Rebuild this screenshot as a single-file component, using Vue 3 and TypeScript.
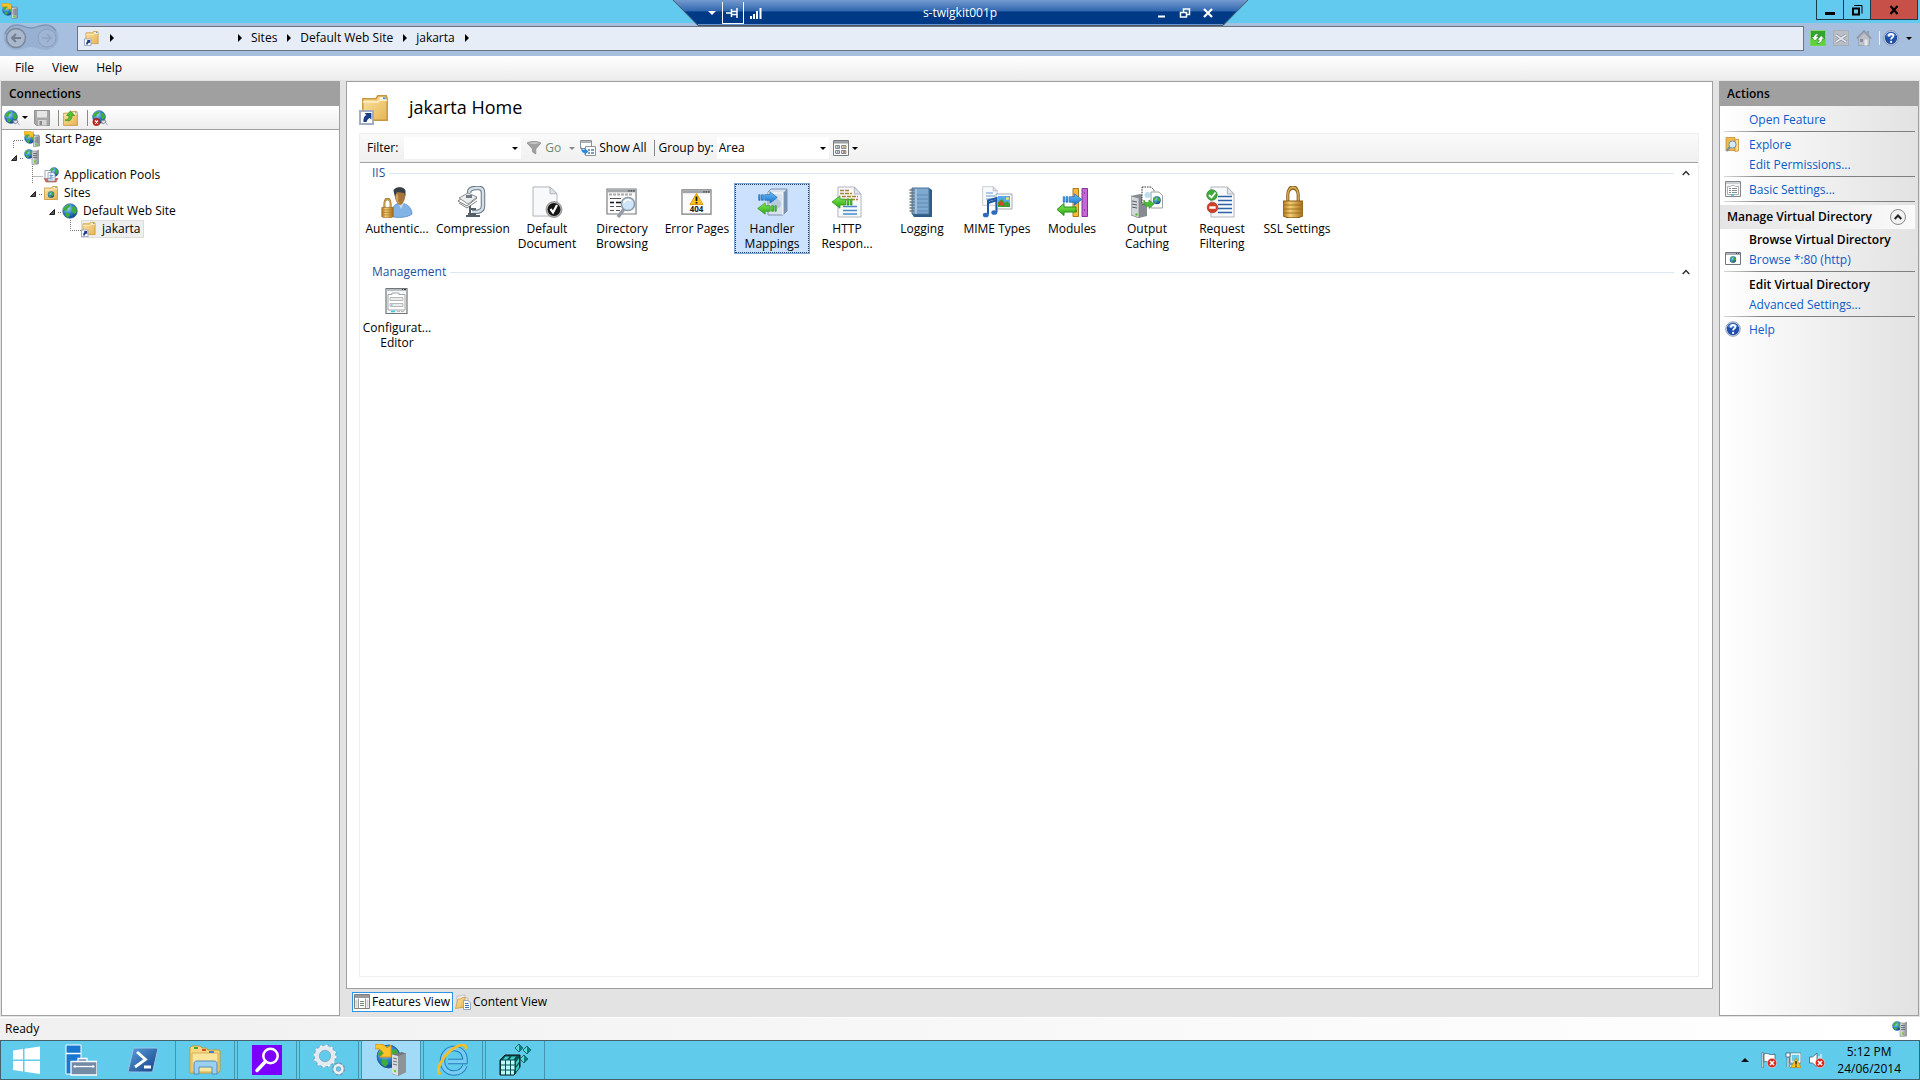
<script setup lang="ts">
import { ref } from 'vue'

interface TreeRow {
  label: string
  level: number
  icon: string
  guide: 'first' | 'middle' | 'last' | 'open'
  selected?: boolean
}

interface Feature {
  label: string
  icon: string
  code?: string
}

interface FeatureGroup {
  name: string
  items: Feature[]
}

const menus: string[] = ['File', 'View', 'Help']
const crumbs: string[] = ['Sites', 'Default Web Site', 'jakarta']

const tree: TreeRow[] = [
  { label: 'Start Page', level: 0, icon: 'iis', guide: 'first' },
  { label: '', level: 0, icon: 'server', guide: 'open' },
  { label: 'Application Pools', level: 1, icon: 'pools', guide: 'middle' },
  { label: 'Sites', level: 1, icon: 'sites', guide: 'open' },
  { label: 'Default Web Site', level: 2, icon: 'globe', guide: 'open' },
  { label: 'jakarta', level: 3, icon: 'folder-link', guide: 'last', selected: true },
]

const groups: FeatureGroup[] = [
  {
    name: 'IIS',
    items: [
      { label: 'Authentic...', icon: 'auth' },
      { label: 'Compression', icon: 'compress' },
      { label: 'Default Document', icon: 'document' },
      { label: 'Directory Browsing', icon: 'directory' },
      { label: 'Error Pages', icon: 'error', code: '404' },
      { label: 'Handler Mappings', icon: 'handler' },
      { label: 'HTTP Respon...', icon: 'response' },
      { label: 'Logging', icon: 'logging' },
      { label: 'MIME Types', icon: 'mime' },
      { label: 'Modules', icon: 'modules' },
      { label: 'Output Caching', icon: 'caching' },
      { label: 'Request Filtering', icon: 'filtering' },
      { label: 'SSL Settings', icon: 'ssl' },
    ],
  },
  { name: 'Management', items: [{ label: 'Configurat... Editor', icon: 'config' }] },
]

const selectedFeature = ref('handler')
const filterText = ref('')
const groupBy = ref('Area')

const taskbar = [
  { icon: 'start', label: 'Start', state: 'pinned' },
  { icon: 'manager', label: 'Server Manager', state: 'pinned' },
  { icon: 'powershell', label: 'PowerShell', state: 'pinned' },
  { icon: 'explorer', label: 'File Explorer', state: 'running' },
  { icon: 'search', label: 'Search', state: 'running' },
  { icon: 'services', label: 'Services', state: 'running' },
  { icon: 'iis-large', label: 'IIS Manager', state: 'active' },
  { icon: 'ie', label: 'Internet Explorer', state: 'running' },
  { icon: 'registry', label: 'Registry Editor', state: 'running' },
]
</script>

<template>
  <div class="desktop">
    <svg class="sprite" width="0" height="0" aria-hidden="true">
      <defs>
        <radialGradient id="gGlobe" cx=".35" cy=".3" r=".8">
          <stop offset="0" stop-color="#a9dcff" /><stop offset=".5" stop-color="#2f7fd0" /><stop offset="1" stop-color="#0c3a7c" />
        </radialGradient>
        <linearGradient id="gFolder" x1="0" y1="0" x2="1" y2="1">
          <stop offset="0" stop-color="#fbe3a0" /><stop offset="1" stop-color="#e6b455" />
        </linearGradient>
        <linearGradient id="gGold" x1="0" y1="0" x2="1" y2="0">
          <stop offset="0" stop-color="#b5781c" /><stop offset=".35" stop-color="#f3cf74" /><stop offset="1" stop-color="#a9701a" />
        </linearGradient>
        <linearGradient id="gSteel" x1="0" y1="0" x2="1" y2="0">
          <stop offset="0" stop-color="#e4e7ea" /><stop offset="1" stop-color="#8c9298" />
        </linearGradient>
        <linearGradient id="gBlue" x1="0" y1="0" x2="0" y2="1">
          <stop offset="0" stop-color="#6fc4fa" /><stop offset="1" stop-color="#1270cc" />
        </linearGradient>
        <linearGradient id="gGreen" x1="0" y1="0" x2="0" y2="1">
          <stop offset="0" stop-color="#8bea5c" /><stop offset="1" stop-color="#27a80f" />
        </linearGradient>
        <linearGradient id="gPs" x1="0" y1="0" x2="1" y2="1">
          <stop offset="0" stop-color="#5aa0de" /><stop offset="1" stop-color="#123f83" />
        </linearGradient>
        <linearGradient id="gRdp" x1="0" y1="0" x2="0" y2="1">
          <stop offset="0" stop-color="#7b9fd4" /><stop offset=".46" stop-color="#2f66ae" /><stop offset=".48" stop-color="#003a87" /><stop offset="1" stop-color="#003a87" />
        </linearGradient>
      </defs>

      <symbol id="globe" viewBox="0 0 16 16">
        <circle cx="8" cy="8" r="7.3" fill="url(#gGlobe)" stroke="#2a5c9c" stroke-width=".6" />
        <path d="M3 3.500 6 1.600l2.300.6-1 2L5.600 5.400 5 7.500 2.600 8 1.200 6.500zM10 4l3-.8 1.600 3L14.800 9 12.500 11l-2-1.500-.5-2.500zM4 9.500l3 .8 1 2-2 2.400-2.600-2z" fill="#3fae36" />
      </symbol>
      <symbol id="server" viewBox="0 0 16 16">
        <use href="#globe" x="0" y="0" width="10" height="10" />
        <path d="M8 2h5l1.500-1V15L8 15.500z" fill="url(#gSteel)" stroke="#7b8086" stroke-width=".6" />
        <path d="M9 4.500h4M9 6.500h4M9 8.500h4" stroke="#595f66" stroke-width=".8" />
        <rect x="10" y="11.500" width="2" height="2" fill="#5fd12c" />
      </symbol>
      <symbol id="iis" viewBox="0 0 16 16">
        <use href="#globe" x="0" y="1" width="12" height="12" />
        <path d="M0 .5h4l2.500-.5 1.500 1.500L9.500.500V6H4.500l1.500-1.500L4.500 3.500 0 4z" fill="#f6c52b" stroke="#d38f12" stroke-width=".5" />
        <path d="M9.500 4.500 14.500 4l1 .8V15l-6 .7z" fill="url(#gSteel)" stroke="#777d83" stroke-width=".6" />
        <path d="M10.500 7h4M10.500 9h4M10.500 11h4" stroke="#575d63" stroke-width=".8" />
        <rect x="11" y="12.500" width="2" height="2" fill="#5fd12c" />
      </symbol>
      <symbol id="iis-large" viewBox="0 0 32 32">
        <use href="#globe" x="1" y="0" width="25" height="25" />
        <path d="M0 1c5-2 9-1 12 3l4-3v12H5l3.500-3.500C7 6 4 4 0 5z" fill="#f9c52e" stroke="#db9415" />
        <path d="M17 10.500 27 8l4 1.500V28L23 32l-6-2z" fill="#73797f" />
        <path d="M17 10.500l6 1.500v20l-6-2.500z" fill="#dadde0" />
        <path d="M23 12l8-2.500V28L23 32z" fill="#8d9399" />
        <path d="M18 14l4 1M18 17l4 1M18 20l4 1" stroke="#676d73" /><circle cx="20" cy="27" r="1.200" fill="#5fd12c" />
      </symbol>
      <symbol id="folder" viewBox="0 0 16 16">
        <path d="M1.500 3h7l1-1.500h4.500l.5 1.500v11.500h-13z" fill="url(#gFolder)" stroke="#c8963c" stroke-width=".8" />
        <path d="M10.500 2.300h3v1.200h-3z" fill="#fff" /><path d="M12.200 2.300h1.400v1h-1.400z" fill="#3a94e8" />
        <path d="M1.500 4.800h8l1-1H14.500" fill="none" stroke="#fdf0c8" stroke-width=".8" />
      </symbol>
      <symbol id="folder-link" viewBox="0 0 16 16">
        <use href="#folder" x="0" y="0" width="16" height="15" />
        <rect x=".5" y="9" width="6.500" height="6.500" fill="#fff" stroke="#a3aec4" />
        <path d="M2.200 14.500c0-2 .3-3 1.500-3.500l-.9-1h3.400v3.300l-.9-.8c-.9.500-1.300 1-1.500 2z" fill="#1b3b8c" />
      </symbol>
      <symbol id="sites" viewBox="0 0 16 16">
        <use href="#folder" width="16" height="16" /><use href="#globe" x="4.500" y="6" width="7" height="7" />
      </symbol>
      <symbol id="pools" viewBox="0 0 16 16">
        <use href="#globe" x="6" y="0" width="10" height="10" />
        <path d="M1 11l2 4h10l2-4" fill="#d9655d" stroke="#a34842" stroke-width=".6" />
        <path d="M2 3.500h6v8H2zM5 5.500h5l2 2V14H5z" fill="#fff" stroke="#8492a6" stroke-width=".8" />
        <path d="M6.500 8.500h4M6.500 10.200h4M6.500 12h4" stroke="#4d8fd0" stroke-width=".8" />
      </symbol>
      <symbol id="connect" viewBox="0 0 16 16">
        <use href="#globe" width="14" height="14" />
        <path d="M9 11l4-1 1 2-3 2zM13.500 13l2 1.800" fill="#dfe3e8" stroke="#87919d" />
      </symbol>
      <symbol id="disconnect" viewBox="0 0 16 16">
        <use href="#connect" width="16" height="16" />
        <circle cx="4.500" cy="12" r="3.700" fill="#c02a1c" stroke="#8d1b12" stroke-width=".5" /><path d="M3 10.500l3 3m0-3-3 3" stroke="#fff" stroke-width="1.200" />
      </symbol>
      <symbol id="save" viewBox="0 0 16 16">
        <path d="M.5.5h15v15H2.500l-2-2z" fill="#a7a7a7" stroke="#929292" /><path d="M3 1h10v6.500H3z" fill="#e5e5e5" /><path d="M4 10h8.500v5.500H4z" fill="#d5d5d5" /><path d="M5.500 11h2.500v4H5.500z" fill="#8b8b8b" />
      </symbol>
      <symbol id="folder-up" viewBox="0 0 16 16">
        <use href="#folder" x="-1" y="0" width="17" height="17" /><path d="M2 10c3 0 4-1.500 4-4.500H3.500L7.500.8 11.500 5.500H9c0 4.500-2.500 6.500-7 4.500z" fill="#50c431" stroke="#258414" stroke-width=".6" />
      </symbol>
      <symbol id="refresh" viewBox="0 0 16 16">
        <rect x=".5" y=".5" width="15" height="15" rx="1" fill="#33a52a" stroke="#8ed27b" /><path d="M.5 9h15v6.500H.5z" fill="#5bd43a" />
        <path d="M6 4 9 3 6.500 6.500 9 6.500 5 11 1.500 7h2.200C3.800 5.500 4.600 4.500 6 4zM10 13 7 13.500 9.500 10 7.500 10 11 5.500 14.500 9h-2.200c-.1 2-.9 3.300-2.300 4z" fill="#fff" stroke="#1d701c" stroke-width=".5" />
      </symbol>
      <symbol id="stop" viewBox="0 0 16 16">
        <rect x=".5" y=".5" width="15" height="15" fill="#b8bdc6" stroke="#a8aeb8" /><path d="M3 5l10 7M13 5l-10 7" stroke="#848b97" stroke-width="3" /><path d="M3 5l10 7M13 5l-10 7" stroke="#e3e6eb" stroke-width="1.600" />
      </symbol>
      <symbol id="home" viewBox="0 0 16 16">
        <path d="M2.500 8v7.500h11V8L8 2.500z" fill="#bcc0c8" stroke="#959ba5" stroke-width=".7" /><path d="M.7 8.500 8 1l7.300 7.500" fill="none" stroke="#8f95a0" stroke-width="1.500" />
        <path d="M11 1h2v4l-2-2z" fill="#989ea8" /><path d="M8.500 9.500h3v6h-3z" fill="#e5e7eb" /><path d="M4 9h3v3H4z" fill="#858c98" />
      </symbol>
      <symbol id="help" viewBox="0 0 16 16">
        <circle cx="8" cy="8" r="7.300" fill="#d5dceb" stroke="#7d8ba8" stroke-width=".8" /><circle cx="8" cy="8" r="6.200" fill="#1f4faa" /><path d="M3 6a5.500 5.500 0 0 1 10 0c-3-1-6 2-10 0z" fill="#5e94da" />
        <path d="M5.800 6.400c0-3.300 4.600-3 4.600-.4 0 1.700-2.300 1.500-2.300 3.400" fill="none" stroke="#fff" stroke-width="1.800" /><circle cx="8.100" cy="11.900" r="1.100" fill="#fff" />
      </symbol>
      <symbol id="explore" viewBox="0 0 16 16">
        <path d="M1 1.500h9v13H1z" fill="#edbb4d" stroke="#bd852a" stroke-width=".7" /><path d="M10 4l3.500-1v12l-3.500.5z" fill="#f9dd85" stroke="#bd852a" stroke-width=".7" />
        <circle cx="7.500" cy="8.500" r="3.600" fill="#d4ebfb" stroke="#7a8da4" /><path d="M5 11 1.500 15" stroke="#7a8da4" stroke-width="2" />
      </symbol>
      <symbol id="settings" viewBox="0 0 16 16">
        <path d="M.5.5h15v15H.5z" fill="#f5f5f5" stroke="#81878d" /><path d="M1 2h14" stroke="#a4a9ae" /><path d="M2.500 5.500h3l1-1h3l1 1h3v8h-11z" fill="#fff" stroke="#9aa0a6" stroke-width=".8" />
        <path d="M4 7.500h2M7 7.500h5M4 9.500h2M7 9.500h5M4 11.500h2M7 11.500h5" stroke="#878d93" /><path d="M6 14h3" stroke="#27cbe0" stroke-width="1.500" />
      </symbol>
      <symbol id="browse" viewBox="0 0 16 16">
        <path d="M.5 1.500h15v12H.5z" fill="#fff" stroke="#6f767d" /><path d="M1 3h14" stroke="#aab0b6" stroke-width="2" /><path d="M11 2.500h1M13 2.500h1" stroke="#41474d" /><use href="#globe" x="4.500" y="5" width="7" height="7" />
      </symbol>
      <symbol id="features" viewBox="0 0 16 16">
        <path d="M.5.5h15v14H.5z" fill="#fff" stroke="#7d7d7d" /><path d="M1 2.500h14" stroke="#999" stroke-width="3" /><path d="M1.500 5.500h2v8h-2zM12.500 5.500h2v8h-2z" fill="#d3d3d3" /><path d="M4.500 4.500v10M11.500 4.500v10" stroke="#999" /><path d="M6 7.500h4M6 9.500h4M6 11.500h4" stroke="#6f8b6c" />
      </symbol>
      <symbol id="content" viewBox="0 0 16 16">
        <path d="M2 2h4l1-1h3v3h3v9H2z" fill="#eee" stroke="#aaa" stroke-width=".6" /><path d="M.5 14.500 3 5h3l1-1.500h3V13z" fill="url(#gFolder)" stroke="#c8963c" stroke-width=".7" />
        <path d="M8.500 6.500h4l3 2v7h-7z" fill="#fff" stroke="#8195ae" stroke-width=".8" /><path d="M10 9.500h3.500M10 11.500h4M10 13.500h4" stroke="#3672b8" />
      </symbol>
      <symbol id="funnel" viewBox="0 0 16 16">
        <path d="M1 3c3-2 11-2 14 0L9.800 9v5L6.500 12V9z" fill="#a0a0a0" stroke="#8a8a8a" stroke-width=".7" /><path d="M2.500 3c3 1.300 8 1.300 11 0-3-1-8-1-11 0z" fill="#c9c9c9" />
      </symbol>
      <symbol id="show-all" viewBox="0 0 16 16">
        <path d="M.5.5h11v8H.5z" fill="#fff" stroke="#8d9298" /><path d="M1 2h10" stroke="#aeb4ba" stroke-width="2" /><path d="M5.500 6.500h10v9h-10z" fill="#fff" stroke="#8d9298" /><path d="M8 10h2m1 0h3M8 13h2m1 0h3" stroke="#567aa8" stroke-width="1.500" />
        <path d="M1.500 6c0 3 1 4 3 4V8l4 3.500-4 3.500v-2C2 13 .5 10 1.500 6z" fill="#2f86dc" />
      </symbol>
      <symbol id="view-mode" viewBox="0 0 16 16">
        <path d="M.5.5h15v15H.5z" fill="#fff" stroke="#767b80" /><path d="M1 2.300h14" stroke="#9b9fa3" stroke-width="2.500" /><path d="M2.500 5.500h4v3h-4zM8.500 5.500H13v3H8.500zM2.500 10.500h4v3h-4zM8.500 10.500H13v3H8.500z" fill="#ddd" stroke="#85898d" />
        <path d="M4 7h1.500M4 12h1.500" stroke="#5593d8" stroke-width="1.500" /><path d="M10 7h2" stroke="#cca33d" stroke-width="1.500" /><path d="M10 12h2" stroke="#c45c4e" stroke-width="1.500" />
      </symbol>

      <symbol id="lock" viewBox="0 0 16 16" preserveAspectRatio="none">
        <path d="M4.200 8V4.500a3.600 3.600 0 0 1 7.600 0V8" fill="none" stroke="#8f6420" stroke-width="2.300" /><path d="M4.200 8V4.500a3.600 3.600 0 0 1 7.600 0V8" fill="none" stroke="#d8b15c" stroke-width=".9" />
        <path d="M1 7.500h14V15c-3 1.300-11 1.300-14 0z" fill="url(#gGold)" stroke="#8d5e16" stroke-width=".6" /><path d="M1.500 9.500h13M1.500 11.500h13M1.500 13.500h13" stroke="#976719" stroke-width=".5" />
      </symbol>
      <symbol id="auth" viewBox="0 0 32 32">
        <path d="M10 30c0-8 3-12 9-13 7 0 12 5 12 11-3 3-15 5-21 2z" fill="#82b3e6" stroke="#4b83c0" stroke-width=".7" /><path d="M17 17l3 6 3-6z" fill="#c3dcf5" />
        <path d="M14 6c0-6 10-6 10 0v6c-1 4-3 7-5 7s-4-3-5-7z" fill="#a8763b" /><path d="M12.500 5C13 0 24 0 24.500 5v6l-1.500-4-7-1-2 5z" fill="#3a3f45" /><path d="M15 8c2-1 3 2 2 7 1 2 2 2 3 2-4 2-6-3-5-9z" fill="#d2a160" />
        <use href="#lock" x="0" y="12" width="13" height="20" />
      </symbol>
      <symbol id="compress" viewBox="0 0 32 32">
        <path d="M13 7c0-4 3-5 7-5h3c3 0 4 2 4 5v13c0 4-3 6-8 6h-3" fill="none" stroke="#6d7881" stroke-width="4.500" /><path d="M13 7c0-4 3-5 7-5h3c3 0 4 2 4 5v13c0 4-3 6-8 6h-3" fill="none" stroke="#d2e0ec" stroke-width="2.500" />
        <path d="M2 15l10-7 9 4-10 8z" fill="#fff" stroke="#7a7f84" /><path d="M3 12l9-5 9 4-9 7z" fill="#ececec" stroke="#8b9095" /><path d="M3 17l8 5 10-7" fill="none" stroke="#7d8287" /><path d="M10 9h6v3h-6z" fill="#6f7a84" /><path d="M14 20v8M10 30h14M15 23h5M12 28h8" stroke="#565f67" stroke-width="2" />
      </symbol>
      <symbol id="page" viewBox="0 0 26 32" preserveAspectRatio="none">
        <path d="M1 1h17l7 7v23H1z" fill="#f8f9fb" stroke="#aeb3ba" /><path d="M18 1v7h7z" fill="#dfe2e6" stroke="#aeb3ba" />
      </symbol>
      <symbol id="document" viewBox="0 0 32 32">
        <use href="#page" x="1" width="26" height="31" /><circle cx="23" cy="23.500" r="8" fill="#b2b2b2" stroke="#707070" stroke-width=".6" /><circle cx="23" cy="23.500" r="6.500" fill="#151515" /><path d="M19.500 23l2.500 3.500L26 19" fill="none" stroke="#fff" stroke-width="2.200" />
      </symbol>
      <symbol id="window" viewBox="0 0 32 28" preserveAspectRatio="none">
        <path d="M1 1h30v26H1z" fill="#fbfbfb" stroke="#777b80" stroke-width="1.200" /><path d="M1.500 3h29" stroke="#a2a6aa" stroke-width="3" /><path d="M23 3h1.500m1 0H27m1 0h1.500" stroke="#333" stroke-width="1.300" />
      </symbol>
      <symbol id="directory" viewBox="0 0 32 32">
        <use href="#window" y="2" width="31" height="27" /><path d="M3 8.500h24" stroke="#aaa" stroke-width="2" stroke-dasharray="3 1" /><path d="M4 12.500h11M4 20.500h4m2 0h5M4 24.500h4m2 0h4" stroke="#555" /><path d="M4 16.500h4m2 0h5" stroke="#111" stroke-width="1.500" />
        <path d="M18 23l-6 8" stroke="#969ca5" stroke-width="3.500" /><circle cx="22" cy="18" r="6.600" fill="#cde5fa" stroke="#8d98a6" stroke-width="1.500" /><path d="M18 17c1-4 5-4 7-2" fill="none" stroke="#fff" stroke-width="1.500" />
      </symbol>
      <symbol id="error" viewBox="0 0 32 32">
        <use href="#window" x="0" y="3" width="31" height="26" /><path d="M15.500 7.500 22 18.500H9z" fill="#fdc51c" stroke="#dc9912" /><path d="M15.500 10.500v4.500m0 1v1.500" stroke="#111" stroke-width="1.800" />
      </symbol>
      <symbol id="arrow-right" viewBox="0 0 22 14">
        <path d="M1 4h1.500v6H1zM4 4h2v6H4zM7.500 4H13V.8L21 7l-8 6.200V10H7.500z" fill="url(#gBlue)" stroke="#1665b4" stroke-width=".7" />
      </symbol>
      <symbol id="arrow-left" viewBox="0 0 22 14">
        <path d="M21 4h-1.500v6H21zM18 4h-2v6h2zM14.500 4H9V.8L1 7l8 6.200V10h5.500z" fill="url(#gGreen)" stroke="#259014" stroke-width=".7" />
      </symbol>
      <symbol id="handler" viewBox="0 0 32 32">
        <path d="M12 6l3-3h16v22l-4 4H12z" fill="#d8e1ec" stroke="#7d92ac" /><path d="M27 7l4-4v22l-4 4z" fill="#7892b2" /><path d="M12 7h15v22" fill="none" stroke="#fff" /><circle cx="20" cy="18" r="5" fill="#b5c8dd" />
        <use href="#arrow-right" x="1" y="5" width="22" height="13" /><use href="#arrow-left" x="0" y="16" width="22" height="13" />
      </symbol>
      <symbol id="response" viewBox="0 0 32 32">
        <use href="#page" x="6" width="25" height="32" /><path d="M9 4.500h10M9 7.500h12M11 10.500h16M15 13.500h12" stroke="#a8842e" stroke-width="1.300" stroke-dasharray="4 1" /><path d="M12 20.500h14M12 24.500h14M12 28h14" stroke="#4a8bd0" stroke-width="1.300" /><use href="#arrow-left" y="9" width="22" height="14" />
      </symbol>
      <symbol id="logging" viewBox="0 0 32 32">
        <path d="M6 2h17l3 2v27H8l-2-3z" fill="#2e5d87" /><path d="M6 2h17v26H6z" fill="#7fa9cf" stroke="#4b7297" /><path d="M10 3v25" stroke="#c5dced" /><path d="M11 9h11M11 13h11M11 17h11M11 21h11M11 25h11" stroke="#5e8ab2" /><path d="M3.500 4h5M3.500 7h5M3.500 10h5M3.500 13h5M3.500 16h5M3.500 19h5M3.500 22h5M3.500 25h5" stroke="#6e757c" stroke-width="1.300" />
      </symbol>
      <symbol id="mime" viewBox="0 0 32 32">
        <use href="#page" x="1" width="16" height="20" /><path d="M5 7h7M5 10h9M5 13h9" stroke="#649bd0" /><path d="M15 8h16v15H15z" fill="#fff" stroke="#a3a8ad" /><path d="M17 10h12v11H17z" fill="#58a7ea" /><path d="M17 21v-5l4-3 3 4 2-2 3 3v3z" fill="#36a22e" /><path d="M17 19l3-5 4 6z" fill="#d6442c" /><circle cx="26.500" cy="12.500" r="1.500" fill="#ffe259" />
        <path d="M7 28V14.500L15.500 12v14" fill="none" stroke="#1f57a4" stroke-width="2" /><path d="M7 17l9-3" stroke="#1f57a4" stroke-width="2" /><ellipse cx="4.800" cy="29" rx="3" ry="2.300" fill="#2d6abf" /><ellipse cx="13.300" cy="26.500" rx="3" ry="2.300" fill="#2d6abf" />
      </symbol>
      <symbol id="modules" viewBox="0 0 32 32">
        <path d="M17 2.500h5.500v28H17z" fill="#f6bb35" stroke="#ab791c" /><path d="M26 2.500h5.500v28H26z" fill="#c765d9" stroke="#7d3790" /><path d="M28 7h1M28 24h1M19 25h2" stroke="#5f2a70" /><use href="#arrow-right" x="6" y="7" width="21" height="13" /><path d="M1 23.500l7-6V21h12v5H8v3.500z" fill="url(#gGreen)" stroke="#259014" />
      </symbol>
      <symbol id="caching" viewBox="0 0 32 32">
        <path d="M0 10l9-2 7 2v20l-8 2-8-3z" fill="#858b91" /><path d="M0 10l8 2v20l-8-3z" fill="#d3d6da" stroke="#7c8288" stroke-width=".7" /><path d="M1 15l5 1M1 18l5 1M1 21l5 1" stroke="#555b61" /><circle cx="5.500" cy="28.500" r="1.200" fill="#56c42f" />
        <path d="M11 1h9l3 3v14H11z" fill="#fff" stroke="#333" stroke-dasharray="1.500 1" /><circle cx="16.500" cy="9" r="3" fill="#bddfec" /><path d="M20 6h8l3.500 3.500V22H20z" fill="#fff" stroke="#9ca2a8" /><use href="#globe" x="21.500" y="10" width="8.500" height="8.500" /><path d="M13 14c1 3 3 3 5 2v-2l5 4-5 4.500V20c-4 1-6-2-5-6z" fill="#4abc38" stroke="#268218" stroke-width=".6" />
      </symbol>
      <symbol id="filtering" viewBox="0 0 32 32">
        <use href="#page" x="4" width="25" height="32" /><path d="M12 10.500h14M12 14.500h14M12 18.500h14M12 22.500h14M12 26.500h14" stroke="#2864ac" stroke-width="1.300" /><circle cx="6" cy="9" r="5.300" fill="#3eaa3a" stroke="#2b762b" stroke-width=".6" /><path d="M3 9l2.500 2.500L9.500 6.500" fill="none" stroke="#fff" stroke-width="1.800" /><circle cx="6.500" cy="21.500" r="5.300" fill="#cf4029" stroke="#8f2918" stroke-width=".6" /><path d="M3.300 20.300h6.400v2.500H3.300z" fill="#fff" />
      </symbol>
      <symbol id="ssl" viewBox="0 0 32 32"><use href="#lock" x="1" y="0" width="22" height="32" /></symbol>
      <symbol id="config" viewBox="1 0 32 32">
        <path d="M6 3.500h21v25H6z" fill="#f7f7f7" stroke="#6f757b" stroke-width="1.200" /><path d="M6.500 5h20" stroke="#b9bdc0" stroke-width="2" /><path d="M22 4.500h1m1 0h2" stroke="#333" /><path d="M8 9.500h4V8h7v1.500h6V25H8z" fill="#fff" stroke="#a1a5a9" /><path d="M10 12.500h13v3H10zM10 18.500h13v3H10z" fill="#ececec" stroke="#aaa" stroke-width=".8" /><path d="M11 26.500h4" stroke="#27d2e8" stroke-width="1.500" /><path d="M17 26.500h7" stroke="#bbb" stroke-dasharray="3 1" /><path d="M11 20h1.500" stroke="#27c2d8" />
      </symbol>

      <symbol id="start" viewBox="0 0 32 32"><path d="M3 6.500 13 5v10.500H3zM14.500 4.700 30 2.500v13H14.500zM3 17h10v10.500L3 26zM14.500 17H30v13l-15.500-2.200z" fill="#fff" /></symbol>
      <symbol id="manager" viewBox="0 0 32 32">
        <path d="M1 1h15v29H1z" fill="#1777d1" stroke="#fff" /><path d="M1 9.500h15" stroke="#fff" stroke-width="1.500" /><path d="M13 17v-2.500h9V17M6 17.500h26V31H6z" fill="#738ba5" stroke="#fff" stroke-width="1.300" /><path d="M8.500 22.500h21" stroke="#fff" stroke-width="1.300" /><path d="M10 21v3m18-3v3" stroke="#fff" />
      </symbol>
      <symbol id="powershell" viewBox="0 0 32 32">
        <path d="M8 4h21c1 0 2 1 1.700 2L26 26c-.3 1-1 2-2 2H3c-1 0-2-1-1.700-2L6 6c.3-1 1-2 2-2z" fill="url(#gPs)" stroke="#9dc5ea" /><path d="M10 8l8.500 7.500L8 23M17 23h7" fill="none" stroke="#fff" stroke-width="2.800" />
      </symbol>
      <symbol id="explorer" viewBox="0 0 32 32">
        <path d="M1 4l2-2h8l2 2h4l2 2h11l1 1v20l-2 2H1z" fill="#f5d77d" stroke="#c39b3b" /><path d="M3 9h26v19H3z" fill="#fae59c" stroke="#d5ae50" /><path d="M5 4h4" stroke="#40a839" stroke-width="2" /><path d="M13 6h4" stroke="#d84a3a" stroke-width="2" /><path d="M20 8h5" stroke="#3783d6" stroke-width="2" /><path d="M5 30V20c0-2 1-3 3-3h17c2 0 3 1 3 3v10h-5v-7H10v7z" fill="#9bd0ee" stroke="#4f8fbd" />
      </symbol>
      <symbol id="search" viewBox="0 0 32 32"><path d="M1 1h30v30H1z" fill="#7b00ff" /><circle cx="19.500" cy="12" r="7.200" fill="none" stroke="#fff" stroke-width="2.500" /><path d="M14.500 17.500 6 26.500" stroke="#fff" stroke-width="3.500" stroke-linecap="round" /></symbol>
      <symbol id="services" viewBox="0 0 32 32">
        <circle cx="12" cy="12" r="9" fill="none" stroke="#7f9bb0" stroke-width="5.500" stroke-dasharray="3 1.700" /><circle cx="12" cy="12" r="8" fill="none" stroke="#e3ebf2" stroke-width="4.500" /><circle cx="12" cy="12" r="10.500" fill="none" stroke="#eef3f7" stroke-width="2" stroke-dasharray="2.400 3.100" /><circle cx="12" cy="12" r="5.700" fill="none" stroke="#8ba2b5" stroke-width=".8" />
        <circle cx="25.500" cy="25" r="4.800" fill="none" stroke="#7c94a8" stroke-width="3.500" stroke-dasharray="2.200 1.600" /><circle cx="25.500" cy="25" r="3.800" fill="none" stroke="#eaf0f5" stroke-width="2.800" /><circle cx="25.500" cy="25" r="2.300" fill="none" stroke="#7c94a8" stroke-width=".7" />
      </symbol>
      <symbol id="ie" viewBox="0 0 32 32">
        <path d="M28 21.500c-2 5-6 7.500-11 7.500C10 29 5.500 24 5.500 17S10.500 4.500 17 4.500c7.500 0 11.500 5.500 11 13H11" fill="none" stroke="#237fbd" stroke-width="5.500" /><path d="M28 21.500c-2 5-6 7.500-11 7.500C10 29 5.500 24 5.500 17S10.500 4.500 17 4.500c7.500 0 11.500 5.500 11 13H11" fill="none" stroke="#78ccf4" stroke-width="3.500" />
        <path d="M3.500 30.500C-3 26 8 8 20 2.500c6-3 10-1.500 8.500 2.500" fill="none" stroke="#f4be29" stroke-width="2.800" />
      </symbol>
      <symbol id="registry" viewBox="0 0 32 32">
        <path d="M1 16l5-5h15v12l-6 8H1z" fill="#064f50" stroke="#111" /><path d="M2 16.500h4v4H2zM7 16.500h4v4H7zM12 16.500h3.500v4H12zM2 21.500h4v4H2zM7 21.500h4v4H7zM12 21.500h3.500v4H12zM2 26.500h4v4H2zM7 26.500h4v4H7zM12 26.500h3v4h-3z" fill="#b8fbf9" /><path d="M6.500 12.500h4l-2.500 3H4zM12.500 12.500H17l-2.500 3h-4zM17 18l3-4v4l-3 4zM17 24l3-4v4l-3 4z" fill="#42cccb" />
        <path d="M20 0l4 4-4 4-4-4zM28 2l4 4-4 4-4-4zM25 11l4 4-4 4-4-4z" fill="#58dddb" stroke="#0b4747" stroke-width=".8" /><path d="M20 0v8l4-4zM28 2v8l4-4zM25 11v8l4-4z" fill="#0c7f80" />
      </symbol>
      <symbol id="tray-x" viewBox="0 0 8 8"><circle cx="4" cy="4" r="3.800" fill="#d42a1f" stroke="#fff" stroke-width=".4" /><path d="M2.400 2.400l3.200 3.200m0-3.200L2.400 5.600" stroke="#fff" stroke-width="1.300" /></symbol>
      <symbol id="tray-flag" viewBox="0 0 16 16"><path d="M1 .5h1.500V16H1z" fill="#fff" stroke="#3b6170" stroke-width=".6" /><path d="M3 2c4-2 5 2 11 0v8c-5 2-7-2-11 0z" fill="#fff" stroke="#3b6170" stroke-width=".8" /><use href="#tray-x" x="6" y="6" width="10" height="10" /></symbol>
      <symbol id="tray-net" viewBox="0 0 16 16"><path d="M6 2h9v8H6zM3 6v9M5 14h8" fill="none" stroke="#24505f" stroke-width="2.500" /><path d="M6 2h9v8H6zM3 6v9M5 14h8" fill="#62cbee" stroke="#fff" stroke-width="1.300" /><path d="M1 1h4v4H1z" fill="#fff" stroke="#24505f" stroke-width=".7" /><path d="M11 6l5 9.500H6z" fill="#fdc51c" stroke="#bd860a" stroke-width=".6" /><path d="M11 9v3.500m0 1v1.200" stroke="#111" stroke-width="1.300" /></symbol>
      <symbol id="tray-sound" viewBox="0 0 16 16"><path d="M.5 5h3L8 1v14l-4.500-4h-3z" fill="#fff" stroke="#3b6170" stroke-width=".8" /><path d="M10 4v3M12 2v5" stroke="#fff" /><use href="#tray-x" x="6" y="6" width="10" height="10" /></symbol>
    </svg>

    <header class="titlebar">
      <svg class="i16"><use href="#iis" /></svg>
      <div class="rdp">
        <svg class="rdp-shape" viewBox="0 0 576 26" preserveAspectRatio="none">
          <path d="M0-1 26 25.500h525L577-1z" fill="url(#gRdp)" stroke="#4b5664" />
          <path d="M26 24.500h525" stroke="#6a96cf" />
        </svg>
        <div class="rdp-tools">
          <button aria-label="Menu"><svg width="8" height="12" viewBox="0 0 8 12"><path d="M0 4h8L4 8z" fill="#fff" /></svg></button>
          <button class="pin" aria-label="Pin"><svg width="14" height="12" viewBox="0 0 14 12"><path d="M0 6h5M5.500 2v8M5 4.500h6M5 7.500h6M11 1v10" fill="none" stroke="#fff" stroke-width="1.500" /></svg></button>
          <svg width="12" height="12" viewBox="0 0 12 12"><path d="M1 12V9M4 12V7M7 12V4M10.500 12V1" stroke="#fff" stroke-width="2" /></svg>
        </div>
        <span class="rdp-name">s-twigkit001p</span>
        <div class="rdp-tools end">
          <button aria-label="Minimize session"><svg width="12" height="12" viewBox="0 0 12 12"><path d="M2 9.500h7" stroke="#fff" stroke-width="2" /></svg></button>
          <button aria-label="Restore session"><svg width="12" height="12" viewBox="0 0 12 12"><path d="M1.500 5.500h6v4.500h-6zM4.500 5V2h6v5.500H8" fill="none" stroke="#fff" stroke-width="1.500" /></svg></button>
          <button aria-label="Close session"><svg width="12" height="12" viewBox="0 0 12 12"><path d="M2 2l8 8M10 2l-8 8" stroke="#fff" stroke-width="2.200" /></svg></button>
        </div>
      </div>
      <div class="window-buttons">
        <button aria-label="Minimize"><svg width="12" height="12" viewBox="0 0 12 12"><path d="M1 9.500h10" stroke="#000" stroke-width="3" /></svg></button>
        <button aria-label="Restore"><svg width="12" height="12" viewBox="0 0 12 12"><path d="M2 4.500h6v6H2z" fill="none" stroke="#000" stroke-width="2" /><path d="M3 1.500h8v8" fill="none" stroke="#000" /></svg></button>
        <button class="close" aria-label="Close"><svg width="12" height="12" viewBox="0 0 12 12"><path d="M2.500 2l7 8M9.500 2l-7 8" stroke="#000" stroke-width="2.200" /></svg></button>
      </div>
    </header>

    <nav class="navbar" aria-label="Location">
      <button class="travel" aria-label="Back and forward">
        <svg width="56" height="28" viewBox="0 0 56 28">
          <path d="M13 1c8 0 9 3 15 3S34 1 43 1a12.500 12.500 0 0 1 0 25c-8 0-9-3-15-3s-7 3-15 3A12.500 12.500 0 0 1 13 1z" fill="#98b0d2" />
          <path d="M2 10C5 2 11 1 14 1c7 0 8 3 14 3s7-3 15-3c5 0 8 3 10 6" fill="none" stroke="#7f95b5" stroke-width="1.500" />
          <circle cx="13" cy="14" r="9.500" fill="#a9b8cd" stroke="#7b8798" stroke-width="1.500" /><circle cx="44" cy="14" r="9" fill="#9fb5d3" stroke="#8b9fbc" />
          <path d="M18 14H9m4-4-4 4 4 4" fill="none" stroke="#737d8c" stroke-width="2" /><path d="M39 14h9m-4-4 4 4-4 4" fill="none" stroke="#8ea3c0" stroke-width="1.500" />
        </svg>
      </button>
      <div class="address">
        <svg class="i16"><use href="#folder-link" /></svg>
        <i class="tri"></i>
        <span class="host"></span>
        <template v-for="crumb in crumbs" :key="crumb">
          <i class="tri"></i><a href="#" class="crumb">{{ crumb }}</a>
        </template>
        <i class="tri"></i>
      </div>
      <div class="nav-tools">
        <button aria-label="Refresh"><svg class="i16"><use href="#refresh" /></svg></button>
        <button aria-label="Stop"><svg class="i16"><use href="#stop" /></svg></button>
        <button aria-label="Home"><svg class="i16"><use href="#home" /></svg></button>
        <i class="rule"></i>
        <button aria-label="Help"><svg class="i16"><use href="#help" /></svg></button>
        <i class="caret"></i>
      </div>
    </nav>

    <div class="menubar"><button v-for="menu in menus" :key="menu">{{ menu }}</button></div>

    <div class="workspace">
      <aside class="panel connections">
        <h2 class="panel-title">Connections</h2>
        <div class="toolbar">
          <button aria-label="Connect"><svg class="i16"><use href="#connect" /></svg></button><i class="caret"></i>
          <button class="save" aria-label="Save"><svg class="i16"><use href="#save" /></svg></button><i class="bar"></i>
          <button aria-label="Up"><svg class="i16"><use href="#folder-up" /></svg></button><i class="bar"></i>
          <button aria-label="Disconnect"><svg class="i16"><use href="#disconnect" /></svg></button>
        </div>
        <ul class="tree" role="tree">
          <li v-for="(row, n) in tree" :key="n" role="treeitem" :style="{ paddingLeft: row.level * 19 + 3 + 'px' }">
            <svg class="guide" width="19" height="18" viewBox="0 0 19 18">
              <g fill="none" stroke="#777" stroke-dasharray="1 1">
                <path v-if="row.guide === 'first'" d="M8.500 18V10.500H19" />
                <path v-if="row.guide === 'middle'" d="M8.500 0V18M8.500 10.500H19" />
                <path v-if="row.guide === 'last'" d="M8.500 0V10.500H19" />
                <path v-if="row.guide === 'open'" d="M15 10.500h4" />
              </g>
              <path v-if="row.guide === 'open'" d="M11.500 7.500v5h-5z" fill="#555" stroke="#222" />
            </svg>
            <span class="node" :class="{ selected: row.selected }"><svg class="i16"><use :href="'#' + row.icon" /></svg><span>{{ row.label }}</span></span>
          </li>
        </ul>
      </aside>

      <section class="center">
        <main class="panel home">
          <div class="home-title"><svg class="i32"><use href="#folder-link" /></svg><h1>jakarta Home</h1></div>
          <div class="features">
            <div class="filterbar">
              <label for="filter">Filter:</label>
              <span class="combo filter"><input id="filter" v-model="filterText" type="text" /><i class="caret"></i></span>
              <button class="go" disabled><svg class="i16"><use href="#funnel" /></svg>Go</button><i class="caret dim"></i>
              <button class="show-all"><svg class="i16"><use href="#show-all" /></svg>Show All</button><i class="bar"></i>
              <label for="group">Group by:</label>
              <span class="combo group"><select id="group" v-model="groupBy"><option>Area</option></select><i class="caret"></i></span>
              <button class="mode" aria-label="View"><svg class="i16"><use href="#view-mode" /></svg><i class="caret"></i></button>
            </div>
            <section v-for="group in groups" :key="group.name" class="group-block">
              <div class="group-head">
                <h3>{{ group.name }}</h3><hr />
                <button :aria-label="'Collapse ' + group.name"><svg width="8" height="6" viewBox="0 0 8 6"><path d="M.7 5 4 1.500 7.300 5" fill="none" stroke="#333" stroke-width="1.500" /></svg></button>
              </div>
              <div class="tiles">
                <button v-for="item in group.items" :key="item.icon" class="tile" :class="{ selected: selectedFeature === item.icon }" @click="selectedFeature = item.icon">
                  <svg class="i32"><use :href="'#' + item.icon" /></svg>
                  <b v-if="item.code" class="code">{{ item.code }}</b>
                  <span>{{ item.label }}</span>
                </button>
              </div>
            </section>
          </div>
        </main>
        <div class="view-tabs">
          <button class="active"><svg class="i16"><use href="#features" /></svg>Features View</button>
          <button><svg class="i16"><use href="#content" /></svg>Content View</button>
        </div>
      </section>

      <aside class="panel actions">
        <h2 class="panel-title">Actions</h2>
        <div class="action-list">
          <div class="row"><a href="#">Open Feature</a></div>
          <hr />
          <div class="row"><svg class="i16"><use href="#explore" /></svg><a href="#">Explore</a></div>
          <div class="row"><a href="#">Edit Permissions...</a></div>
          <hr />
          <div class="row"><svg class="i16"><use href="#settings" /></svg><a href="#">Basic Settings...</a></div>
          <hr />
          <div class="section-head">
            <h3>Manage Virtual Directory</h3>
            <button aria-label="Collapse"><svg width="8" height="6" viewBox="0 0 8 6"><path d="M.7 5 4 1.500 7.300 5" fill="none" stroke="#222" stroke-width="2" /></svg></button>
          </div>
          <div class="row"><h4>Browse Virtual Directory</h4></div>
          <div class="row"><svg class="i16"><use href="#browse" /></svg><a href="#">Browse *:80 (http)</a></div>
          <hr />
          <div class="row"><h4>Edit Virtual Directory</h4></div>
          <div class="row"><a href="#">Advanced Settings...</a></div>
          <hr />
          <div class="row"><svg class="i16"><use href="#help" /></svg><a href="#">Help</a></div>
        </div>
      </aside>
    </div>

    <div class="statusbar"><span>Ready</span><svg class="i16"><use href="#server" /></svg></div>

    <footer class="taskbar">
      <button v-for="task in taskbar" :key="task.icon" :class="['task', task.state]" :aria-label="task.label"><svg class="i32"><use :href="'#' + task.icon" /></svg></button>
      <div class="tray">
        <svg width="8" height="4" viewBox="0 0 8 4"><path d="M4 0l4 4H0z" fill="#111" /></svg>
        <svg class="i16"><use href="#tray-flag" /></svg>
        <svg class="i16"><use href="#tray-net" /></svg>
        <svg class="i16"><use href="#tray-sound" /></svg>
        <time class="clock"><span>5:12 PM</span><span>24/06/2014</span></time>
      </div>
    </footer>
  </div>
</template>

<style>
body {
  margin: 0;
}
</style>

<style scoped>
.desktop {
  display: flex;
  flex-direction: column;
  min-height: 100vh;
  background: #e3e3e3;
  color: #000;
  font: 12px/16px 'Segoe UI', 'Open Sans', 'Noto Sans', sans-serif;
}
.desktop * {
  box-sizing: border-box;
}
.sprite {
  position: absolute;
}
button,
input,
select {
  margin: 0;
  padding: 0;
  border: 0;
  background: none;
  color: inherit;
  font: inherit;
}
button {
  display: flex;
  align-items: center;
}
h1,
h2,
h3,
h4,
ul {
  margin: 0;
  padding: 0;
  font-size: inherit;
  font-weight: 600;
}
a {
  text-decoration: none;
}
svg {
  flex: none;
  display: block;
}
.i16 {
  width: 16px;
  height: 16px;
}
.i32 {
  width: 32px;
  height: 32px;
}
.caret {
  flex: none;
  border: 3px solid transparent;
  border-top-color: #000;
  border-bottom: 0;
}
.caret.dim {
  border-top-color: #888;
}
.tri {
  border: 4px solid transparent;
  border-left-color: #000;
  border-right: 0;
}
.bar {
  width: 1px;
  height: 16px;
  background: #8a8a8a;
}

.titlebar {
  position: relative;
  display: flex;
  align-items: flex-start;
  justify-content: space-between;
  height: 23px;
  padding: 3px 2px 0;
  background: #62caee;
}
.rdp {
  position: absolute;
  z-index: 2;
  top: 0;
  left: calc(50% - 288px);
  width: 576px;
  height: 26px;
  display: flex;
  align-items: center;
  padding: 0 34px;
  color: #fff;
}
.rdp-shape {
  position: absolute;
  inset: 0;
  width: 100%;
  height: 100%;
}
.rdp-tools,
.rdp-name {
  position: relative;
}
.rdp-tools {
  flex: 1;
  display: flex;
  align-items: center;
  gap: 6px;
  height: 23px;
  padding-left: 2px;
}
.rdp-tools.end {
  justify-content: flex-end;
  gap: 11px;
}
.pin {
  height: 22px;
  padding: 0 3px;
  border: 1px solid #fff;
  border-top: 0;
}
.window-buttons {
  display: flex;
  height: 20px;
  margin-top: -3px;
  border: 1px solid #1a3a48;
  border-top: 0;
}
.window-buttons button {
  width: 27px;
  justify-content: center;
  border-right: 1px solid #1a3a48;
}
.window-buttons .close {
  width: 46px;
  border: 0;
  background: #c75048;
}

.navbar {
  display: flex;
  align-items: center;
  height: 33px;
  padding: 0 8px 3px 3px;
  background: #a7bfdf;
}
.travel {
  width: 74px;
}
.address {
  flex: 1;
  display: flex;
  align-items: center;
  height: 25px;
  padding-left: 6px;
  border: 1px solid #6b7380;
  background: #e7edf7;
}
.address .tri {
  margin-left: 10px;
}
.host {
  width: 114px;
}
.crumb {
  margin-left: 9px;
  color: #000;
}
.nav-tools {
  display: flex;
  align-items: center;
  gap: 7px;
  margin-left: 6px;
}
.rule {
  width: 1px;
  height: 14px;
  background: #e8eef7;
  margin-right: -4px;
}

.menubar {
  display: flex;
  height: 24px;
  padding-left: 15px;
  gap: 18px;
  background: linear-gradient(#fff, #ededed);
}

.workspace {
  flex: 1;
  display: flex;
  gap: 6px;
  padding: 1px;
}
.panel {
  border: 1px solid #a0a0a0;
  background: #fff;
}
.panel-title {
  height: 24px;
  padding-left: 7px;
  background: #a0a0a0;
  line-height: 24px;
}
.connections {
  flex: none;
  width: 339px;
}
.toolbar {
  display: flex;
  align-items: center;
  gap: 4px;
  height: 24px;
  padding-left: 2px;
  border-bottom: 1px solid #a0a0a0;
  background: linear-gradient(#fff, #eee);
}
.toolbar .caret {
  margin-left: -2px;
}
.toolbar .save {
  margin-left: 2px;
}
.toolbar .bar {
  margin-left: 4px;
}
.tree {
  list-style: none;
  font-weight: 400;
}
.tree li {
  display: flex;
  height: 18px;
  align-items: center;
}
.node {
  display: flex;
  align-items: center;
  gap: 5px;
  height: 18px;
  padding-right: 3px;
}
.node.selected {
  background: #eee;
  box-shadow: 0 0 0 1px #ddd inset;
}

.center {
  flex: 1;
  min-width: 0;
  display: flex;
  flex-direction: column;
}
.home {
  flex: 1;
  display: flex;
  flex-direction: column;
  padding: 11px 13px 11px 12px;
}
.home-title {
  display: flex;
  align-items: flex-start;
  gap: 18px;
  height: 40px;
}
.home-title h1 {
  font-size: 18px;
  font-weight: 400;
  line-height: 28px;
}
.features {
  flex: 1;
  border: 1px solid #efefef;
}
.filterbar {
  display: flex;
  align-items: center;
  height: 29px;
  padding-left: 7px;
  border-bottom: 1px solid #a0a0a0;
  background: linear-gradient(#fafafa, #f0f0f0);
}
.combo {
  display: flex;
  align-items: center;
  height: 22px;
  margin-left: 6px;
  padding-right: 3px;
  background: #fff;
}
.combo.filter {
  width: 117px;
}
.combo.group {
  width: 112px;
  margin-left: 3px;
}
.combo input,
.combo select {
  flex: 1;
  min-width: 0;
  height: 22px;
  appearance: none;
  outline: 0;
}
.combo select {
  padding-left: 2px;
}
.go {
  gap: 3px;
  margin: 0 8px 0 5px;
  color: #6d8a73;
}
.show-all {
  gap: 3px;
  margin: 0 7px 0 5px;
}
.filterbar .bar + label {
  margin-left: 4px;
}
.mode {
  gap: 3px;
  margin-left: 4px;
}
.group-block {
  height: 99px;
}
.group-head {
  display: flex;
  align-items: center;
  height: 20px;
  padding: 0 8px 0 12px;
}
.group-head h3 {
  color: #1e4f9f;
  font-weight: 400;
}
.group-head hr {
  flex: 1;
  height: 1px;
  margin: 0 8px 0 4px;
  border: 0;
  background: #dbe7f5;
}
.tiles {
  display: flex;
  flex-wrap: wrap;
  gap: 1px;
  padding-top: 1px;
}
.tile {
  position: relative;
  flex-direction: column;
  width: 74px;
  height: 69px;
  padding-top: 1px;
  border: 1px solid transparent;
  line-height: 15px;
  text-align: center;
}
.tile span {
  margin-top: 3px;
  max-width: 72px;
}
.tile .code {
  position: absolute;
  top: 19px;
  left: 0;
  width: 71px;
  font-size: 8px;
  line-height: 10px;
  color: #222;
}
.tile.selected {
  border: 1px dotted #1d3f6e;
  background: #cce1fd;
  outline: 1px solid #7da7d9;
}
.view-tabs {
  display: flex;
  height: 27px;
  padding: 3px 6px 4px;
}
.view-tabs button {
  gap: 2px;
  padding: 0 2px 0 1px;
  border: 1px solid transparent;
}
.view-tabs .active {
  border-color: #2e95e6;
  background: #fff;
}

.actions {
  flex: none;
  width: 200px;
  background: linear-gradient(90deg, #fff, #e2e2e2);
}
.action-list {
  padding: 4px 3px 0 4px;
}
.row {
  position: relative;
  display: flex;
  align-items: center;
  height: 20px;
  padding-left: 25px;
}
.row svg {
  position: absolute;
  left: 1px;
  top: 1px;
}
.row a {
  color: #0b5cc9;
}
.action-list hr {
  height: 1px;
  margin: 1px 0 3px;
  border: 0;
  background: linear-gradient(90deg, #d8d8d8, #808080 20%, #808080);
}
.section-head {
  display: flex;
  align-items: center;
  justify-content: space-between;
  height: 24px;
  margin: 0 0 1px -4px;
  padding: 0 9px 0 7px;
  background: linear-gradient(90deg, #e4e4e4, #fafafa);
}
.section-head button {
  width: 16px;
  height: 16px;
  justify-content: center;
  border: 1px solid #888;
  border-radius: 8px;
  background: #f2f2f2;
}

.statusbar {
  display: flex;
  align-items: center;
  justify-content: space-between;
  height: 23px;
  padding: 0 12px 0 5px;
  border-top: 1px solid #fff;
  background: linear-gradient(90deg, #f0f0f0, #fff);
}
.taskbar {
  display: flex;
  align-items: stretch;
  height: 40px;
  border: 1px solid #45616e;
  background: #60cbea;
}
.task {
  justify-content: center;
  width: 60px;
  margin-right: 2px;
}
.task.pinned:first-child {
  width: 50px;
  margin: 0;
}
.task.running,
.task.active {
  border: solid #4595ad;
  border-width: 0 1px;
}
.task.active {
  background: #a1dbf7;
}
.tray {
  display: flex;
  align-items: center;
  gap: 8px;
  margin-left: auto;
  padding-right: 18px;
}
.tray svg:first-child {
  margin-right: 4px;
}
.clock {
  display: flex;
  flex-direction: column;
  align-items: center;
  margin-left: 4px;
  line-height: 17px;
}
</style>
